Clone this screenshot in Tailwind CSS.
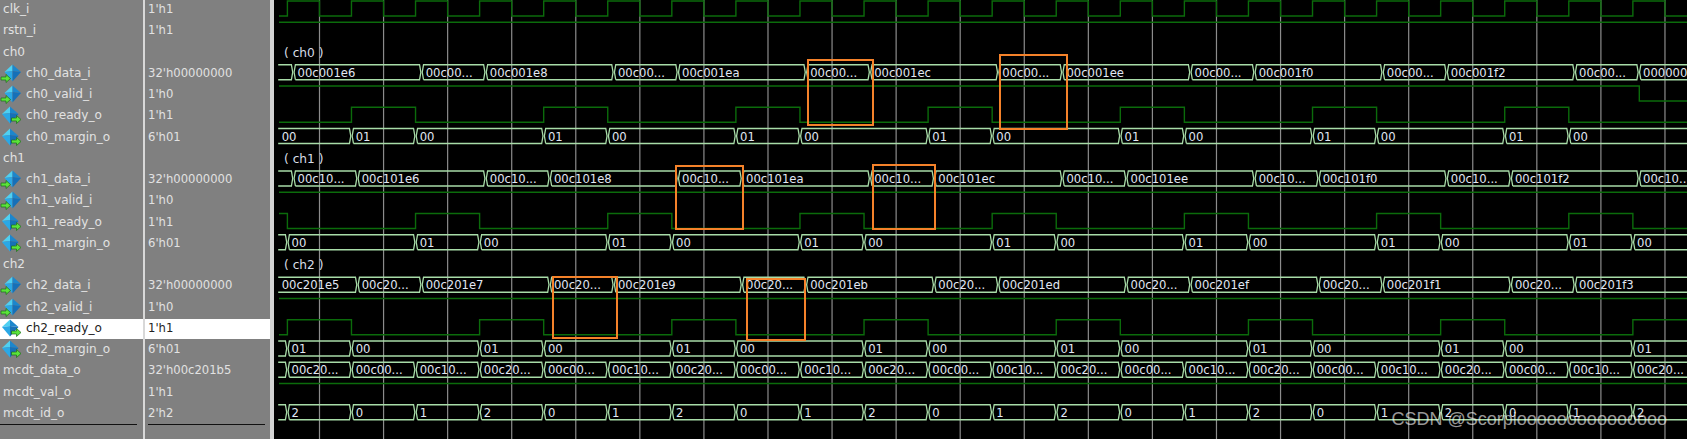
<!DOCTYPE html>
<html lang="en">
<head>
    <meta charset="UTF-8">
    <title>Wave</title>
    <script src="https://cdn.jsdelivr.net/npm/@tailwindcss/browser@4"></script>
</head>
<body class="bg-black overflow-hidden">
    <svg class="hidden">
        <defs>
            <g id="diamond">
                <polygon points="8,0.500 0,8 8,7" fill="#4fd0f2"/>
                <polygon points="8,0.500 16.500,8 8,7" fill="#1c86cc"/>
                <polygon points="0,8 8,7 8,17.500" fill="#2aa8e6"/>
                <polygon points="16.500,8 8,7 8,17.500" fill="#1670b8"/>
            </g>
            <path id="arrow" d="M0 2.500H5V0L9.500 4L5 8V5.500H0Z" fill="#5be33a" stroke="#1a6a1a" stroke-width="0.7"/>
            <g id="icon-in"><use href="#diamond" x="4.500" y="0"/><use href="#arrow" x="1" y="10.500"/></g>
            <g id="icon-out"><use href="#diamond" x="2" y="0"/><use href="#arrow" x="11.500" y="9.500"/></g>
        </defs>
    </svg>

    <div class="flex w-[1687px] h-[439px] font-['DejaVu_Sans',sans-serif] text-[#e2e2e2]">
        <!-- signal names -->
        <div class="w-[143px] shrink-0 bg-[#808080] text-[12.1px] flex flex-col">
            <div class="h-[21.25px]"><div class="h-[20px] leading-[18px] pl-[3px]">clk_i</div></div>
            <div class="h-[21.25px]"><div class="h-[20px] leading-[18px] pl-[3px]">rstn_i</div></div>
            <div class="h-[21.25px]"><div class="h-[20px] leading-[18px] pl-[3px]">ch0</div></div>
            <div class="h-[21.25px]"><div class="h-[20px] leading-[18px] flex"><svg class="w-[26px] h-[20px] shrink-0"><use href="#icon-in"/></svg>ch0_data_i</div></div>
            <div class="h-[21.25px]"><div class="h-[20px] leading-[18px] flex"><svg class="w-[26px] h-[20px] shrink-0"><use href="#icon-in"/></svg>ch0_valid_i</div></div>
            <div class="h-[21.25px]"><div class="h-[20px] leading-[18px] flex"><svg class="w-[26px] h-[20px] shrink-0"><use href="#icon-out"/></svg>ch0_ready_o</div></div>
            <div class="h-[21.25px]"><div class="h-[20px] leading-[18px] flex"><svg class="w-[26px] h-[20px] shrink-0"><use href="#icon-out"/></svg>ch0_margin_o</div></div>
            <div class="h-[21.25px]"><div class="h-[20px] leading-[18px] pl-[3px]">ch1</div></div>
            <div class="h-[21.25px]"><div class="h-[20px] leading-[18px] flex"><svg class="w-[26px] h-[20px] shrink-0"><use href="#icon-in"/></svg>ch1_data_i</div></div>
            <div class="h-[21.25px]"><div class="h-[20px] leading-[18px] flex"><svg class="w-[26px] h-[20px] shrink-0"><use href="#icon-in"/></svg>ch1_valid_i</div></div>
            <div class="h-[21.25px]"><div class="h-[20px] leading-[18px] flex"><svg class="w-[26px] h-[20px] shrink-0"><use href="#icon-out"/></svg>ch1_ready_o</div></div>
            <div class="h-[21.25px]"><div class="h-[20px] leading-[18px] flex"><svg class="w-[26px] h-[20px] shrink-0"><use href="#icon-out"/></svg>ch1_margin_o</div></div>
            <div class="h-[21.25px]"><div class="h-[20px] leading-[18px] pl-[3px]">ch2</div></div>
            <div class="h-[21.25px]"><div class="h-[20px] leading-[18px] flex"><svg class="w-[26px] h-[20px] shrink-0"><use href="#icon-in"/></svg>ch2_data_i</div></div>
            <div class="h-[21.25px]"><div class="h-[20px] leading-[18px] flex"><svg class="w-[26px] h-[20px] shrink-0"><use href="#icon-in"/></svg>ch2_valid_i</div></div>
            <div class="h-[21.25px]"><div class="h-[20px] leading-[18px] flex bg-white text-[#222]"><svg class="w-[26px] h-[20px] shrink-0"><use href="#icon-out"/></svg>ch2_ready_o</div></div>
            <div class="h-[21.25px]"><div class="h-[20px] leading-[18px] flex"><svg class="w-[26px] h-[20px] shrink-0"><use href="#icon-out"/></svg>ch2_margin_o</div></div>
            <div class="h-[21.25px]"><div class="h-[20px] leading-[18px] pl-[3px]">mcdt_data_o</div></div>
            <div class="h-[21.25px]"><div class="h-[20px] leading-[18px] pl-[3px]">mcdt_val_o</div></div>
            <div class="h-[21.25px]"><div class="h-[20px] leading-[18px] pl-[3px]">mcdt_id_o</div></div>
            <div class="border-t border-[#111] mr-[6px] -mt-[1px]"></div>
        </div>
        <div class="w-[2px] shrink-0 bg-[#d8d8d8]"></div>

        <!-- values -->
        <div class="w-[125px] shrink-0 bg-[#808080] text-[11.6px] flex flex-col">
            <div class="h-[21.25px]"><div class="h-[20px] leading-[18px] pl-[3px]">1'h1</div></div>
            <div class="h-[21.25px]"><div class="h-[20px] leading-[18px] pl-[3px]">1'h1</div></div>
            <div class="h-[21.25px]"></div>
            <div class="h-[21.25px]"><div class="h-[20px] leading-[18px] pl-[3px]">32'h00000000</div></div>
            <div class="h-[21.25px]"><div class="h-[20px] leading-[18px] pl-[3px]">1'h0</div></div>
            <div class="h-[21.25px]"><div class="h-[20px] leading-[18px] pl-[3px]">1'h1</div></div>
            <div class="h-[21.25px]"><div class="h-[20px] leading-[18px] pl-[3px]">6'h01</div></div>
            <div class="h-[21.25px]"></div>
            <div class="h-[21.25px]"><div class="h-[20px] leading-[18px] pl-[3px]">32'h00000000</div></div>
            <div class="h-[21.25px]"><div class="h-[20px] leading-[18px] pl-[3px]">1'h0</div></div>
            <div class="h-[21.25px]"><div class="h-[20px] leading-[18px] pl-[3px]">1'h1</div></div>
            <div class="h-[21.25px]"><div class="h-[20px] leading-[18px] pl-[3px]">6'h01</div></div>
            <div class="h-[21.25px]"></div>
            <div class="h-[21.25px]"><div class="h-[20px] leading-[18px] pl-[3px]">32'h00000000</div></div>
            <div class="h-[21.25px]"><div class="h-[20px] leading-[18px] pl-[3px]">1'h0</div></div>
            <div class="h-[21.25px]"><div class="h-[20px] leading-[18px] pl-[3px] bg-white text-[#222]">1'h1</div></div>
            <div class="h-[21.25px]"><div class="h-[20px] leading-[18px] pl-[3px]">6'h01</div></div>
            <div class="h-[21.25px]"><div class="h-[20px] leading-[18px] pl-[3px]">32'h00c201b5</div></div>
            <div class="h-[21.25px]"><div class="h-[20px] leading-[18px] pl-[3px]">1'h1</div></div>
            <div class="h-[21.25px]"><div class="h-[20px] leading-[18px] pl-[3px]">2'h2</div></div>
            <div class="border-t border-[#111] ml-[3px] mr-[5px] -mt-[1px]"></div>
        </div>
        <div class="w-[4px] shrink-0 bg-[#d4d4d4]"></div>

        <!-- waves -->
        <div class="flex-1 bg-black overflow-hidden">
            <svg id="wave" viewBox="274 0 1413 439" class="w-[1413px] h-[439px] block"></svg>
        </div>
    </div>

    <script>
        const wave = document.getElementById('wave');
        const PITCH = 21.25;
        const PERIOD = 64.07;
        const END = 1690;

        const rise = k => 287.4 + PERIOD * k;
        const fall = k => 319.5 + PERIOD * k;
        const top_ = row => 1 + PITCH * row;

        function add(tag, attrs, text) {
            const el = document.createElementNS('http://www.w3.org/2000/svg', tag);
            for (const key in attrs) el.setAttribute(key, attrs[key]);
            if (text) el.textContent = text;
            wave.appendChild(el);
        }

        function signal(row, edges, startHigh) {
            const hi = top_(row), lo = hi + 15;
            let level = startHigh;
            let pts = [[279, level ? hi : lo]];
            edges.forEach(x => {
                pts.push([x, level ? hi : lo]);
                level = !level;
                pts.push([x, level ? hi : lo]);
            });
            pts.push([END, level ? hi : lo]);
            add('polyline', { points: pts.join(' '), class: 'fill-none stroke-[#0b6b0b] stroke-[1.4px]' });
        }

        function bus(row, edges, labels, start = 277.5) {
            const t = top_(row), b = t + 15, m = t + 7.5;
            const xs = [start, ...edges, END];
            labels.forEach((label, i) => {
                const a = xs[i] + 0.7, z = xs[i + 1] - 0.7;
                // the first segment has no left tip, the trace just begins there
                const pts = i === 0
                    ? [[a, t], [z - 1.3, t], [z, m], [z - 1.3, b], [a, b]]
                    : [[a + 1.3, b], [a, m], [a + 1.3, t], [z - 1.3, t], [z, m], [z - 1.3, b], [a + 1.3, b]];
                add('polyline', { points: pts.join(' '), class: 'fill-none stroke-[#a8dca8] stroke-[1.3px]' });
                if (label) add('text', { x: a + 3.5, y: m + 4.5, class: 'fill-[#e2e8f4] text-[11.6px]' }, label);
            });
        }

        // vertical grid
        for (let k = 0; k < 22; k++) {
            add('line', { x1: fall(k), x2: fall(k), y1: 0, y2: 439, class: 'stroke-[#8c8c8c] stroke-[1.2px]' });
        }

        // clock and plain level signals
        const clk = [];
        for (let k = 0; k < 22; k++) clk.push(rise(k), fall(k));
        signal(0, clk, false);
        signal(1, [], true);
        signal(4, [1639.3], true);
        signal(9, [], true);
        signal(14, [], true);
        signal(18, [], true);

        // ready pulses and margin, one out of three cycles per channel
        function channel(readyRow, phase) {
            const edges = [], marginEdges = [];
            for (let k = -1; k < 22; k++) {
                if ((k + 3) % 3 === phase) {
                    if (k >= 0) edges.push(rise(k));
                    edges.push(rise(k + 1));
                }
            }
            signal(readyRow, edges.filter(x => x < END), phase === 2);
            let labels = phase === 1 ? ['00'] : [''];
            for (let k = 0; k < 22; k++) {
                if (k % 3 === phase) { marginEdges.push(rise(k)); labels.push('01'); }
                else if ((k + 2) % 3 === phase) { marginEdges.push(rise(k)); labels.push('00'); }
            }
            bus(readyRow + 1, marginEdges, labels);
        }
        channel(5, 1);
        channel(10, 2);
        channel(15, 0);

        // data buses: cycle k of the list marks each change
        const k0 = [0, 2, 3, 5, 6, 8, 9, 11, 12, 14, 15, 17, 18, 20, 21].map(k => rise(k) + 6);
        bus(3, k0, ['', '00c001e6', '00c00...', '00c001e8', '00c00...', '00c001ea', '00c00...', '00c001ec', '00c00...', '00c001ee', '00c00...', '00c001f0', '00c00...', '00c001f2', '00c00...', '00000000']);

        const k1 = [0, 1, 3, 4, 6, 7, 9, 10, 12, 13, 15, 16, 18, 19, 21].map(k => rise(k) + 6);
        bus(8, k1, ['', '00c10...', '00c101e6', '00c10...', '00c101e8', '00c10...', '00c101ea', '00c10...', '00c101ec', '00c10...', '00c101ee', '00c10...', '00c101f0', '00c10...', '00c101f2', '00c10...']);

        const k2 = [1, 2, 4, 5, 7, 8, 10, 11, 13, 14, 16, 17, 19, 20].map(k => rise(k) + 6);
        bus(13, k2, ['00c201e5', '00c20...', '00c201e7', '00c20...', '00c201e9', '00c20...', '00c201eb', '00c20...', '00c201ed', '00c20...', '00c201ef', '00c20...', '00c201f1', '00c20...', '00c201f3']);

        // mcdt output, one change every cycle
        const every = [], dataLabels = [''], idLabels = [''];
        for (let k = 0; k < 22; k++) {
            every.push(rise(k));
            dataLabels.push(['00c20...', '00c00...', '00c10...'][k % 3]);
            idLabels.push(['2', '0', '1'][k % 3]);
        }
        bus(17, every, dataLabels);
        bus(19, every, idLabels);

        // group labels
        add('text', { x: 284, y: 56.5, class: 'fill-[#d8dee8] text-[12.2px]' }, '( ch0 )');
        add('text', { x: 284, y: 162.5, class: 'fill-[#d8dee8] text-[12.2px]' }, '( ch1 )');
        add('text', { x: 284, y: 269, class: 'fill-[#d8dee8] text-[12.2px]' }, '( ch2 )');

        // hand drawn highlight boxes
        [[808, 60, 65, 65], [1000, 55, 67, 74], [676, 166, 67, 63], [873, 165, 62, 64], [553, 277, 64, 61], [747, 279, 58, 61]].forEach(b => {
            add('rect', { x: b[0], y: b[1], width: b[2], height: b[3], class: 'fill-none stroke-[#f5822a] stroke-2' });
        });

        add('text', { x: 1391.5, y: 425, class: "fill-white/60 text-[18px] font-['Liberation_Sans',sans-serif]" }, 'CSDN @Scorpiooooooooooooooo');
    </script>
</body>
</html>
